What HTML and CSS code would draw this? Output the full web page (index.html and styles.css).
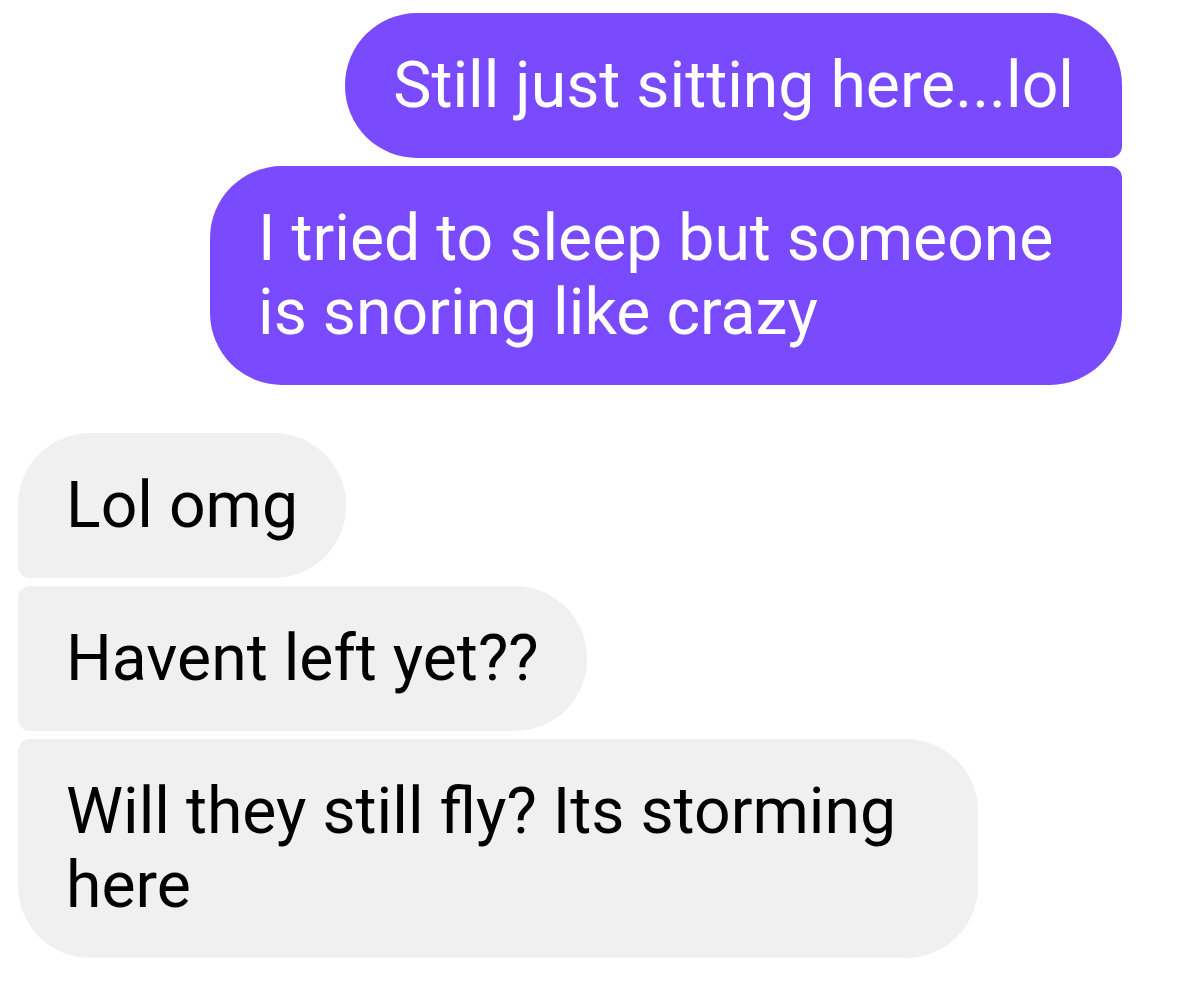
FILE: index.html
```html
<!DOCTYPE html>
<html lang="en">
<head>
    <meta charset="UTF-8">
    <meta name="viewport" content="width=device-width, initial-scale=1.0">
    <title>Chat</title>
    <link rel="stylesheet" href="styles.css">
</head>
<body>

<div class="thread">

    <!-- Sent messages -->
    <div class="group sent">
        <div class="bubble first">Still just sitting here...lol</div>
        <div class="bubble last">I tried to sleep but someone is snoring like crazy</div>
    </div>

    <!-- Received messages -->
    <div class="group received">
        <div class="bubble first">Lol omg</div>
        <div class="bubble middle">Havent left yet??</div>
        <div class="bubble last">Will they still fly? Its storming here</div>
    </div>

</div>

</body>
</html>
```

FILE: styles.css
```css
body {
    font-family: 'Roboto', 'Liberation Sans', sans-serif;
    margin: 0;
    padding: 0;
    background: #fff;
}

.thread {
    padding: 13px 57px 20px 18px;
    display: flex;
    flex-direction: column;
    gap: 48px;
}

.group {
    display: flex;
    flex-direction: column;
    gap: 8px;
}

.group.sent {
    align-items: flex-end;
}

.group.received {
    align-items: flex-start;
}

.bubble {
    font-size: 64.3px;
    line-height: 74px;
    padding: 35px 48px 36px 48px;
    border-radius: 72px;
    box-sizing: border-box;
}

.sent .bubble {
    background: #7a4aff;
    color: #fff;
    max-width: 912px;
}

.received .bubble {
    background: #f0f0f0;
    color: #000;
    max-width: 960px;
}

/* tighten corners on the side where bubbles stack */
.sent .first {
    border-bottom-right-radius: 12px;
}

.sent .last {
    border-top-right-radius: 12px;
}

.received .first {
    border-bottom-left-radius: 12px;
}

.received .middle {
    border-top-left-radius: 12px;
    border-bottom-left-radius: 12px;
}

.received .last {
    border-top-left-radius: 12px;
}
```
